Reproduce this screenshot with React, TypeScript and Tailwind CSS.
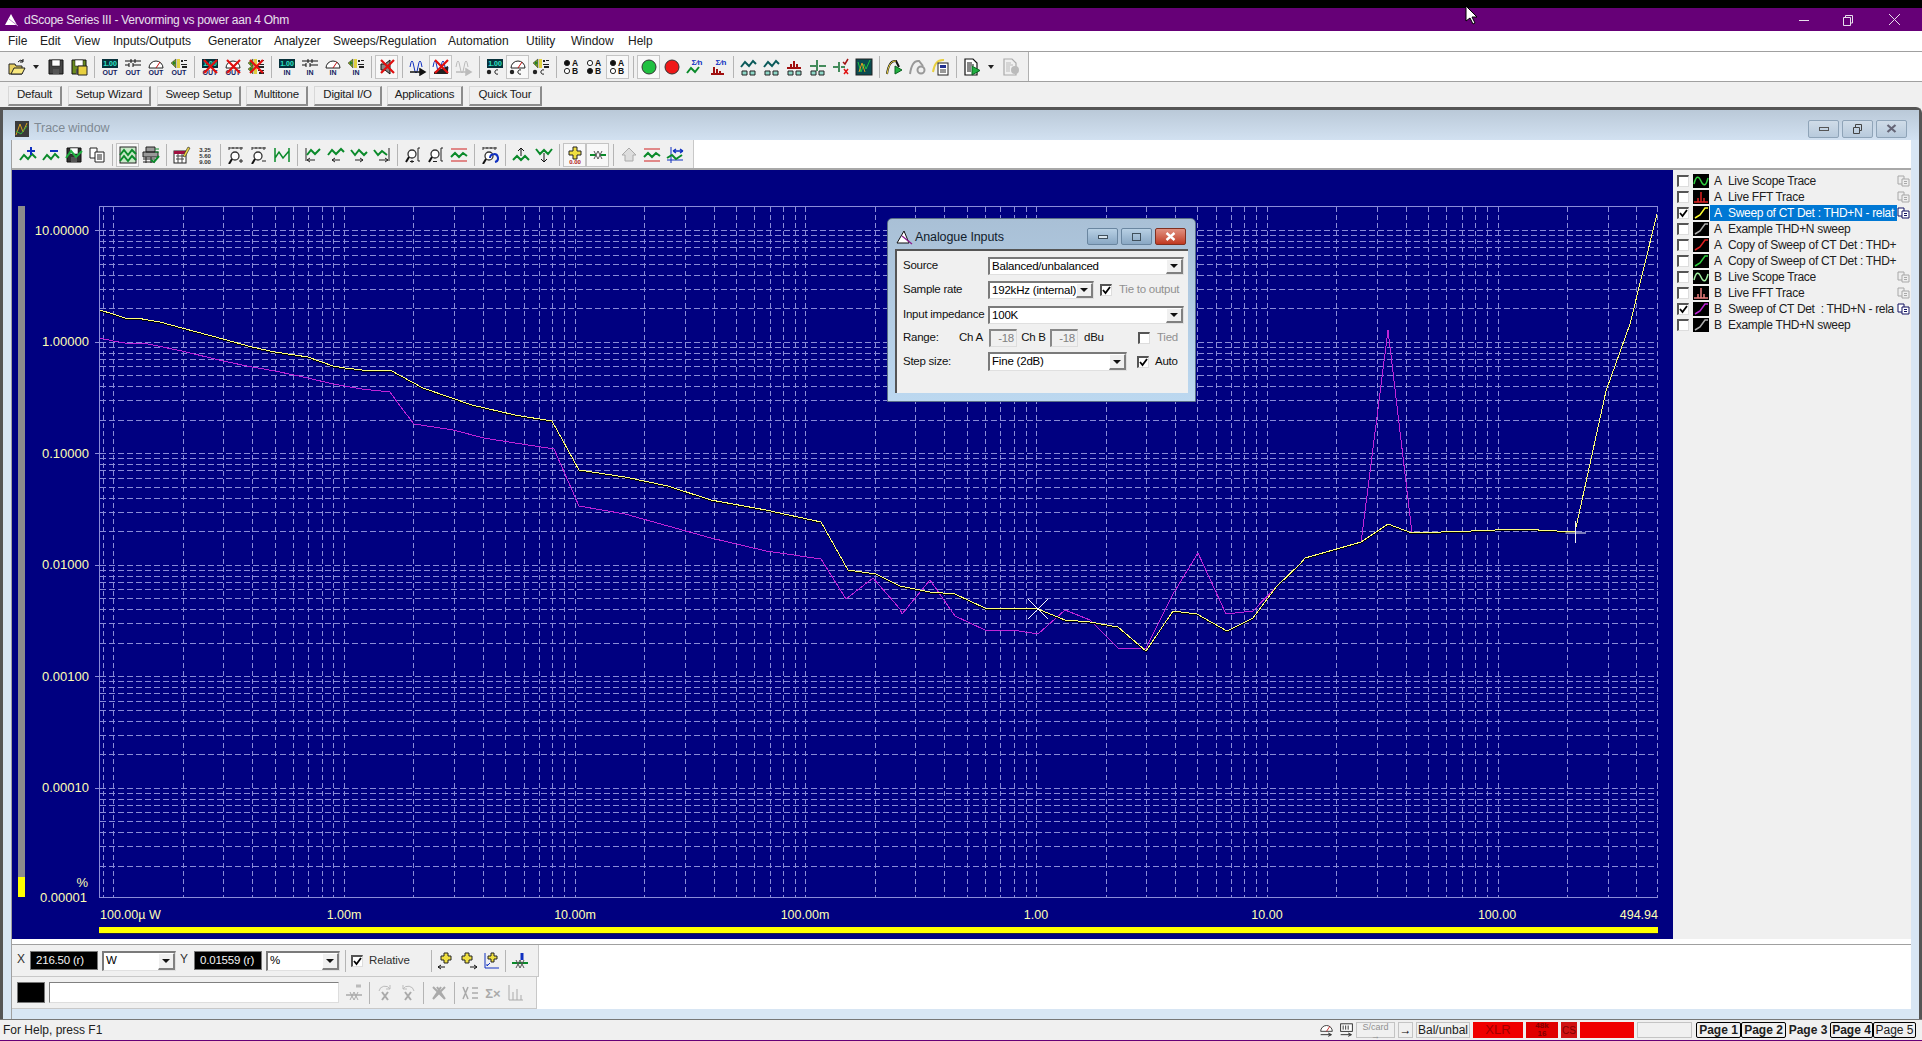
import React from 'react';

// icon helpers, all in a 18x18 box
const wave = (c = '#0a8a2a', d = 'M1 14l4-5 4 4 4-5 4 4') => <path d={d} fill="none" stroke={c} strokeWidth={2} />;
const cross = <path d="M3 2L16 15M16 2L3 15" stroke="#e01010" strokeWidth={2.2} />;
const label = (t: string) => (
  <text x={9} y={17} fontSize={7} fontWeight={700} textAnchor="middle" fill="#102060">{t}</text>
);
const disp = (
  <>
    <rect x={1} y={1} width={16} height={9} fill="#06303a" />
    <text x={9} y={8} fontSize={7} fontWeight={700} textAnchor="middle" fill="#30e8c8">1.00</text>
  </>
);
const swi = <path d="M1 3h6M1 7h4M11 3h6M9 7h8M7 1v4M11 1v4M5 5v4M9 5v4M7 3h4" stroke="#111" fill="none" />;
const dial = (
  <>
    <path d="M2 10a7 7 0 0 1 14 0z" fill="#fff" stroke="#222" />
    <path d="M9 10l4-6" stroke="#c01010" />
  </>
);
const gen = (
  <>
    <path d="M1 5l5-4v9z" fill="#7a9a20" stroke="#333" strokeWidth={0.5} />
    <rect x={7} y={1} width={3} height={9} fill="#e0d040" />
    <path d="M11 2h2v2h-2zM14 2h3v1h-3zM11 6h6v1h-6zM12 8h5v2h-5z" fill="#222" />
    <path d="M3 3l3 2-3 2z" fill="#208030" />
  </>
);
const floppy = (body: string, extra?: React.ReactNode) => (
  <>
    <path d="M2 2h14v14H2z" fill={body} stroke="#111" />
    <rect x={5} y={2} width={8} height={6} fill="#fff" stroke="#111" strokeWidth={0.5} />
    <rect x={6} y={11} width={6} height={5} fill="#555" />
    {extra}
  </>
);
const selDots = (
  <>
    <circle cx={3} cy={14} r={2.2} fill="#222" />
    <path d="M12 12a2.2 2.2 0 1 0 0 4" fill="none" stroke="#222" />
  </>
);
const ab = (a: boolean) => (
  <>
    <circle cx={4} cy={5} r={2.6} fill={a ? '#111' : '#fff'} stroke="#222" />
    <circle cx={4} cy={13} r={2.6} fill={a ? '#fff' : '#111'} stroke="#222" />
    <text x={12} y={8} fontSize={8.5} fontWeight={700} textAnchor="middle" fill="#111">A</text>
    <text x={12} y={16} fontSize={8.5} fontWeight={700} textAnchor="middle" fill="#111">B</text>
  </>
);
const mini = (c: string) => (
  <>
    <path d={c === 'r' ? 'M1 10h14M8 3v7M5 6v4M11 6v4' : 'M1 9l4-5 4 4 4-5 3 3'} fill="none" stroke={c === 'r' ? '#a01010' : '#0a5a5a'} strokeWidth={2} />
    <path d="M2 13h5v4H2zM10 13h5v4h-5z" fill="#8fd8c8" stroke="#222" />
  </>
);
const ruler = <path d="M2 2h14M2 1v3M6 1v2M10 1v2M14 1v3" stroke="#333" fill="none" />;
const lens = (
  <>
    <circle cx={8} cy={8} r={4} fill="#fff" stroke="#333" strokeWidth={1.3} />
    <path d="M5 11l-3 5" stroke="#111" strokeWidth={2} />
  </>
);
const brack = <path d="M16 2h-2v13h2" stroke="#222" fill="none" />;
const blue = '#1030c0';

const icons: Record<string, React.ReactNode> = {
  open: (
    <>
      <path d="M1 6h6l1 2h6v8H1z" fill="#e8d060" stroke="#222" />
      <path d="M3 16l3-6h11l-3 6z" fill="#f8e880" stroke="#222" />
      <path d="M10 4q2-3 5-1M15 1v3h-3" fill="none" stroke="#111" />
    </>
  ),
  save: floppy('#444'),
  saveas: (
    <>
      {floppy('#6a8a20')}
      <path d="M8 8h9v9H8z" fill="#e8d040" stroke="#222" />
    </>
  ),
  oD: <>{disp}{label('OUT')}</>,
  oS: <>{swi}{label('OUT')}</>,
  oM: <>{dial}{label('OUT')}</>,
  oG: <>{gen}{label('OUT')}</>,
  xD: <>{disp}{label('OUT')}{cross}</>,
  xM: <>{dial}{label('OUT')}{cross}</>,
  xG: <>{gen}<g transform="translate(0 6)">{gen}</g>{cross}</>,
  iD: <>{disp}{label('IN')}</>,
  iS: <>{swi}{label('IN')}</>,
  iM: <>{dial}{label('IN')}</>,
  iG: <>{gen}{label('IN')}</>,
  mute: (
    <>
      <path d="M3 6h4l5-4v14l-5-4H3z" fill="#888" stroke="#111" />
      {cross}
    </>
  ),
  wgo: (
    <>
      <path d="M1 9q2-12 4 0t4 0q2-12 4 0" fill="none" stroke={blue} />
      <path d="M1 14h12M11 11l5 3-5 3z" fill="#111" stroke="#111" strokeWidth={1.5} />
    </>
  ),
  wx: (
    <>
      <path d="M1 9q2-12 4 0t4 0q2-12 4 0t3 0" fill="none" stroke={blue} />
      <path d="M2 14l14-6v8H2z" fill="#222" />
      {cross}
    </>
  ),
  wgray: (
    <>
      <path d="M1 9q2-12 4 0t4 0q2-12 4 0" fill="none" stroke="#bbb" />
      <path d="M1 14h12M11 11l5 3-5 3z" fill="#bbb" stroke="#bbb" strokeWidth={1.5} />
    </>
  ),
  sD: <g transform="translate(0 0)">{disp}{selDots}</g>,
  sM: <>{dial}{selDots}</>,
  sG: <>{gen}{selDots}</>,
  ab1: ab(true),
  ab2: ab(false),
  ab3: ab(true),
  go: <circle cx={9} cy={9} r={7} fill="#20c040" stroke="#333" />,
  stop: <circle cx={9} cy={9} r={7} fill="#f01818" stroke="#333" />,
  sig: (
    <>
      {wave('#0a8a2a', 'M1 15l4-5 4 4 4-5')}
      <text x={11} y={7} fontSize={8} fontWeight={700} textAnchor="middle" fill={blue}>Σ⁄n</text>
    </>
  ),
  fft: (
    <>
      <path d="M2 16h13M5 16V9M8 16v-5M11 16v-3" stroke="#a01010" strokeWidth={2} />
      <text x={12} y={7} fontSize={8} fontWeight={700} textAnchor="middle" fill={blue}>Σ⁄n</text>
    </>
  ),
  a1: mini('g'),
  a2: mini('g'),
  a3: mini('r'),
  a4: (
    <>
      <path d="M1 8h6M8 2v11M10 8h7" stroke="#0a6a2a" strokeWidth={1.5} />
      <path d="M2 13h5v4H2zM10 13h5v4h-5z" fill="#8fd8c8" stroke="#222" />
    </>
  ),
  a5: (
    <>
      <path d="M1 9h5M7 4v10M9 9h4" stroke="#0a6a2a" strokeWidth={1.5} />
      <path d="M11 4l2 2 3-5" stroke="#a01010" fill="none" strokeWidth={1.5} />
      <path d="M12 11l4 5M16 11l-4 5" stroke="#e01010" strokeWidth={1.5} />
    </>
  ),
  a6: (
    <>
      <rect x={1} y={1} width={16} height={16} fill="#0a4a50" stroke="#222" />
      <path d="M3 4l3 10 3-8 2 5 4-9" fill="none" stroke="#20c040" />
      <path d="M4 14l3-9 3 9" fill="none" stroke="#d8a020" />
    </>
  ),
  b1: (
    <>
      <path d="M1 16Q3 2 10 3l3 6" fill="none" stroke="#111" strokeWidth={2} />
      <path d="M1 16Q3 2 10 3" fill="none" stroke="#e8d040" />
      <path d="M9 8l7 4-7 4z" fill="#20b040" stroke="#0a6020" />
    </>
  ),
  b2: (
    <>
      <path d="M1 16Q3 2 10 3l4 5" fill="none" stroke="#999" strokeWidth={2} />
      <circle cx={12} cy={12} r={3.5} fill="none" stroke="#999" strokeWidth={2} />
    </>
  ),
  b3: (
    <>
      <path d="M1 14Q3 1 12 2" fill="none" stroke="#e8d040" strokeWidth={2} />
      <rect x={6} y={5} width={10} height={12} fill="#fff" stroke="#222" />
      <path d="M8 7h6v3H8z" fill="#203090" />
      <path d="M8 12h6M8 14h6" stroke="#333" />
    </>
  ),
  c1: (
    <>
      <path d="M2 1h8l4 4v12H2z" fill="#fff" stroke="#111" strokeWidth={1.2} />
      <path d="M4 5h5M4 7h7M4 9h4M4 11h4M4 13h4" stroke="#111" />
      <path d="M9 8l8 4.5L9 17z" fill="#20b040" stroke="#0a6020" />
    </>
  ),
  c2: (
    <>
      <path d="M2 1h8l4 4v12H2z" fill="#f0f0f0" stroke="#aaa" strokeWidth={1.2} />
      <path d="M4 5h5M4 7h7M4 9h4M4 11h4M4 13h4" stroke="#bbb" />
      <circle cx={13} cy={12} r={4} fill="#bbb" />
    </>
  ),
  // trace window toolbar
  'tr+': <>{wave()}<path d="M12 1v8M8 5h8" stroke={blue} strokeWidth={2} /></>,
  'tr-': <>{wave()}<path d="M8 5h8" stroke={blue} strokeWidth={2} /></>,
  tsave: <>{floppy('#333')}{wave('#20b040', 'M1 12l5-7 5 6 6-6')}</>,
  tcopy: (
    <>
      <path d="M2 2h7v10H2z" fill="#fff" stroke="#222" />
      <path d="M7 6h9v10H7z" fill="#fff" stroke="#222" />
      <path d="M9 9h5M9 11h5M9 13h5" stroke="#222" />
    </>
  ),
  tchart: (
    <>
      <rect x={1} y={1} width={16} height={16} fill="#c8e8c8" stroke="#222" />
      {wave('#0a8a2a', 'M1 9l4-5 4 5 4-5 4 4')}
      {wave('#0a8a2a', 'M1 15l4-5 4 5 4-5 4 4')}
    </>
  ),
  tprint: (
    <>
      <path d="M4 1h9v5H4zM1 6h15v5H1z" fill="#999" stroke="#222" />
      <path d="M1 13h12M1 16h12M4 11v6M9 11v6" stroke="#222" />
      {wave('#0a8a2a', 'M9 14l3 2 5-6')}
      <path d="M13 3h4M13 6h4" stroke="#0a8a2a" />
    </>
  ),
  tedit: (
    <>
      <rect x={1} y={5} width={12} height={12} fill="#fff" stroke="#222" />
      <rect x={1} y={5} width={12} height={3} fill="#a01040" />
      <path d="M3 10h8M3 13h8M5 8v9M9 8v9" stroke="#444" />
      <path d="M10 10l5-9 2 1-5 9z" fill="#e8d040" stroke="#222" strokeWidth={0.6} />
    </>
  ),
  tnum: (
    <g fontSize={6} fontWeight={700} fill="#333" textAnchor="middle">
      <text x={9} y={6}>3.25</text>
      <text x={9} y={12}>5.60</text>
      <text x={9} y={18}>9.00</text>
    </g>
  ),
  'z+': <>{ruler}<g transform="translate(0 2)">{lens}</g><path d="M14 13v4M12 15h4" stroke="#222" /></>,
  'z-': <>{ruler}<g transform="translate(0 2)">{lens}</g><path d="M12 15h4" stroke="#222" /></>,
  zm: <path d="M2 2v14M16 2v14M2 12l4-6 4 6 6-7" fill="none" stroke="#0a8a2a" strokeWidth={1.5} />,
  l1: <><path d="M2 2v13" stroke="#222" />{wave('#0a8a2a', 'M3 9l4-5 4 4 5-5')}<path d="M3 14h8M3 14l3-2M3 14l3 2" stroke="#222" fill="none" /></>,
  l2: <>{wave('#0a8a2a', 'M1 9l4-5 4 4 5-5 3 3')}<path d="M5 14h8M5 14l3-2M5 14l3 2" stroke="#222" fill="none" /></>,
  l3: <>{wave('#0a8a2a', 'M1 4l4 5 4-5 5 5 3-3')}<path d="M5 14h8M13 14l-3-2M13 14l-3 2" stroke="#222" fill="none" /></>,
  l4: <><path d="M16 2v13" stroke="#222" />{wave('#0a8a2a', 'M1 4l4 5 4-4 5 4')}<path d="M6 14h9M15 14l-3-2M15 14l-3 2" stroke="#222" fill="none" /></>,
  'm+': <>{lens}{brack}<path d="M8 14v3M6 15.5h4" stroke="#222" /></>,
  'm-': <>{lens}{brack}<path d="M6 15.5h4" stroke="#222" /></>,
  mw: <><path d="M1 3h16M1 15h16" stroke="#d02020" />{wave('#0a8a2a', 'M1 11l4-4 4 4 4-4 4 3')}</>,
  mu: <>{ruler}<g transform="translate(0 2)">{lens}</g><path d="M9 12a4 4 0 1 1 5 4" fill="none" stroke={blue} strokeWidth={2} /></>,
  up: <>{wave('#0a8a2a', 'M1 14l4-4 4 4 4-4 4 4')}<path d="M9 10V2M6 5l3-3 3 3" stroke="#111" fill="none" /></>,
  dn: <>{wave('#0a8a2a', 'M1 3l4 5 4-4 4 4 4-5')}<path d="M9 7v9M6 13l3 3 3-3" stroke="#111" fill="none" /></>,
  cur: (
    <>
      <path d="M7 1h4v4h4v4h-4v4H7V9H3V5h4z" fill="#f0e040" stroke="#222" />
      <text x={9} y={17.5} fontSize={6} fontWeight={700} textAnchor="middle" fill="#b02020">0.00</text>
    </>
  ),
  curx: <><path d="M1 9h6M11 9h6" stroke="#0a8a2a" strokeWidth={2} /><path d="M5 5l4 8M9 5l4 8M5 13l4-8M9 13l4-8" stroke="#555" /></>,
  g1: <path d="M9 2l7 7-3 0v6H5V9H2z" fill="#ddd" stroke="#aaa" />,
  g2: <><path d="M1 3h16M1 15h16" stroke="#d02020" />{wave('#0a8a2a', 'M1 11l4-4 4 4 4-4 4 3')}</>,
  g3: <><path d="M5 1v16M1 14h16" stroke={blue} />{wave('#0a8a2a', 'M1 12l5-3 4 4 6-4')}<path d="M7 5h10M7 5l3-2M7 5l3 2M17 5l-3-2M17 5l-3 2" stroke={blue} fill="none" strokeWidth={1.4} /></>,
  // cursor toolbar
  cl: <><path d="M7 1h4v3h3v4h-3v3H7V8H4V4h3z" fill="#f0e040" stroke="#222" /><path d="M1 15h7M1 15l3-2M1 15l3 2" stroke="#111" fill="none" /></>,
  cr: <><path d="M5 1h4v3h3v4H9v3H5V8H2V4h3z" fill="#f0e040" stroke="#222" /><path d="M10 15h7M17 15l-3-2M17 15l-3 2" stroke="#111" fill="none" /></>,
  cc: <><path d="M2 1v15h14" stroke={blue} fill="none" /><path d="M8 1h3v3h3v3h-3v3H8V7H5V4h3z" fill="#f0e040" stroke="#222" /><path d="M4 14l3-3M4 14v-2" stroke={blue} /></>,
  cd: <><path d="M11 1v7" stroke={blue} strokeWidth={3} /><path d="M1 11h16" stroke="#0a8a2a" strokeWidth={2} /><path d="M5 8l4 8M9 8l4 8M5 16l4-8M9 16l4-8" stroke="#555" /></>,
  e1: <><path d="M1 11h16" stroke="#bbb" strokeWidth={2} /><path d="M11 2h5" stroke="#bbb" strokeWidth={3} /><path d="M5 8l4 8M9 8l4 8M5 16l4-8M9 16l4-8" stroke="#aaa" /></>,
  e2: <><path d="M3 7a6 6 0 0 1 11-2M14 1v4h-4" stroke="#bbb" fill="none" /><path d="M6 8l6 8M12 8l-6 8" stroke="#aaa" strokeWidth={2} /></>,
  e3: <><path d="M15 7a6 6 0 0 0-11-2M4 1v4h4" stroke="#bbb" fill="none" /><path d="M6 8l6 8M12 8l-6 8" stroke="#aaa" strokeWidth={2} /></>,
  e4: <path d="M3 3l12 12M15 3L3 15M7 3l8 12M11 3L3 15" stroke="#aaa" strokeWidth={2} />,
  e5: <path d="M2 3l5 12M7 3L2 15M11 4h6M11 9h6M11 14h6" stroke="#aaa" strokeWidth={1.5} />,
  e6: <text x={9} y={14} fontSize={13} fontWeight={700} textAnchor="middle" fill="#aaa">Σ×</text>,
  e7: <path d="M2 1v15h14M6 16V8M10 16V5M14 16v-5" stroke="#aaa" fill="none" />,
};

function Ic({ n, size = 18 }: { n: string; size?: number }) {
  return (
    <svg width={size} height={size} viewBox="0 0 18 18" shapeRendering="geometricPrecision">
      {icons[n]}
    </svg>
  );
}

// names: "|" separator, "~" dropdown arrow, trailing * means pressed button
function Toolbar({ items, className, tight }: { items: string[]; className: string; tight?: boolean }) {
  return (
    <div className={className}>
      {items.map((it, i) => {
        if (it === '|') {
          return (
            <div key={i} className={tight ? 'w-[5px] h-full flex justify-center items-center' : 'w-[8px] h-full flex justify-center items-center'}>
              <div className="w-[1px] h-[22px] bg-[#b4b4b4]" />
            </div>
          );
        }
        if (it === '~') {
          return (
            <div key={i} className="w-[16px] h-full flex justify-center items-center">
              <div className="w-0 h-0 border-x-[3px] border-x-transparent border-t-[4px] border-t-[#222]" />
            </div>
          );
        }
        const pressed = it.endsWith('*');
        return (
          <div
            key={i}
            className={
              pressed
                ? 'w-[23px] h-[24px] flex justify-center items-center border border-[#c4c4c4] bg-[#f8f8f8]'
                : 'w-[23px] h-[24px] flex justify-center items-center'
            }
          >
            <Ic n={pressed ? it.slice(0, -1) : it} />
          </div>
        );
      })}
    </div>
  );
}

function Arrow() {
  return (
    <div className="w-[17px] h-full shrink-0 flex justify-center items-center bg-[#f0f0f0] border-l border-t border-l-white border-t-white border-r-2 border-b-2 border-r-[#808080] border-b-[#808080]">
      <div className="w-0 h-0 border-x-[4px] border-x-transparent border-t-[4px] border-t-[#111]" />
    </div>
  );
}

function Combo({ text, className }: { text: string; className: string }) {
  return (
    <div className={'flex bg-white border-l-2 border-t-2 border-l-[#7a7a7a] border-t-[#7a7a7a] border-r border-b border-r-[#e0e0e0] border-b-[#e0e0e0] ' + className}>
      <div className="flex-1 pl-[2px] text-[11.5px] leading-[15px] tracking-[-0.2px] text-black whitespace-nowrap overflow-hidden">{text}</div>
      <Arrow />
    </div>
  );
}

function Check({ on }: { on?: boolean }) {
  return (
    <div className="w-[12px] h-[12px] shrink-0 bg-white border-l-2 border-t-2 border-l-[#555] border-t-[#555] border-r border-b border-r-[#ddd] border-b-[#ddd] flex items-center justify-center">
      {on && (
        <svg width={9} height={9} viewBox="0 0 9 9">
          <path d="M1 4l2.5 3L8 1" fill="none" stroke="#000" strokeWidth={1.8} />
        </svg>
      )}
    </div>
  );
}

function Field({ text }: { text: string }) {
  return (
    <div className="w-[68px] h-[19px] bg-black border border-[#777] text-[#f4f4f4] text-[11.5px] tracking-[-0.2px] leading-[17px] pl-[5px] whitespace-nowrap">{text}</div>
  );
}

// chart scale, in page pixels
const px = (v: number) => 344 + 230.7 * (Math.log10(v) + 3);
const py = (v: number) => 342.7 - 111.5 * Math.log10(v);
const LEFT = 99.5;
const RIGHT = 1657.5;
const TOP = 207.5;
const BOTTOM = 898.5;

const xLines: number[] = [];
const yLines: number[] = [];
for (let e = -5; e <= 2; e++) {
  for (let m = 1; m <= 9; m++) {
    const x = px(m * 10 ** e);
    if (x > LEFT + 1 && x < RIGHT - 1) xLines.push(Math.round(x) + 0.5);
  }
}
for (let e = -5; e <= 1; e++) {
  for (let m = 1; m <= 9; m++) {
    const y = py(m * 10 ** e);
    if (y > TOP + 1 && y < BOTTOM - 1) yLines.push(Math.round(y) + 0.5);
  }
}

const tail = '1412,534 1471,532 1520,530 1575,533 1606,392 1630,325 1657,215';
const yellow =
  '100,311 113,315 125,319 137,319 148,321 160,323 182,329 223,340 252,348 275,353 308,358 333,367 345,369 362,371 390,371 423,389 472,406 515,416 552,422 579,471 625,478 668,487 711,501 766,511 821,523 848,571 876,575 900,587 930,593 955,595 985,609 1025,609 1038,610 1065,621 1090,623 1118,628 1146,652 1173,612 1197,615 1227,632 1253,619 1277,587 1300,565 1305,559 1361,543 1388,525 ' +
  tail;
const purple =
  '100,339 113,342 125,344 148,345 182,352 223,362 252,368 275,372 308,379 333,385 362,390 390,393 400,407 414,425 453,431 484,439 515,444 554,450 579,507 625,515 668,527 711,539 766,552 821,560 846,600 873,579 900,610 902,615 930,581 955,617 985,631 1012,631 1038,635 1065,611 1090,621 1118,649 1146,649 1173,595 1198,554 1226,615 1253,612 1277,587 1300,565 1305,559 1361,544 1388,331 ' +
  tail;

const yLabels = ['10.00000', '1.00000', '0.10000', '0.01000', '0.00100', '0.00010'];
const xLabels: [string, number][] = [
  ['1.00m', 344],
  ['10.00m', 575],
  ['100.00m', 805],
  ['1.00', 1036],
  ['10.00', 1267],
  ['100.00', 1497],
];

function Chart() {
  const grid = '#8a8cd8';
  return (
    <svg width={1661} height={769} viewBox="12 171 1661 769" className="block">
      <rect x={18} y={207} width={7} height={691} fill="#8c8c8c" />
      <rect x={18} y={878} width={7} height={20} fill="#ffff00" />
      {yLines.map((y, i) => (
        <path key={i} d={`M${LEFT} ${y}H${RIGHT}`} stroke={grid} strokeDasharray="6 3" shapeRendering="crispEdges" />
      ))}
      {xLines.map((x, i) => (
        <path key={i} d={`M${x} ${TOP}V${BOTTOM}`} stroke={grid} strokeDasharray="5 3" shapeRendering="crispEdges" />
      ))}
      <path d={`M${RIGHT} ${TOP}H${LEFT}V${BOTTOM}H${RIGHT}`} fill="none" stroke={grid} shapeRendering="crispEdges" />
      <path d={`M${RIGHT} ${TOP}V${BOTTOM}`} stroke={grid} strokeDasharray="5 3" shapeRendering="crispEdges" />
      {yLabels.map((t, i) => (
        <React.Fragment key={t}>
          <path d={`M95 ${Math.round(py(10 / 10 ** i)) + 0.5}H99`} stroke={grid} shapeRendering="crispEdges" />
          <text x={89} y={py(10 / 10 ** i) + 4.5} fontSize={13} textAnchor="end" fill="#ffffb4">{t}</text>
        </React.Fragment>
      ))}
      <text x={88} y={888} fontSize={13} textAnchor="end" fill="#ffffb4">%</text>
      <text x={87} y={903} fontSize={13} textAnchor="end" fill="#ffffb4">0.00001</text>
      <text x={100} y={920} fontSize={12.5} fill="#ffffb4">100.00µ W</text>
      {xLabels.map(([t, x]) => (
        <text key={t} x={x} y={920} fontSize={12.5} textAnchor="middle" fill="#ffffb4">{t}</text>
      ))}
      <text x={1658} y={920} fontSize={12.5} textAnchor="end" fill="#ffffb4">494.94</text>
      <rect x={99} y={928} width={1559} height={6} fill="#ffff00" />
      <path d="M99 934.5H1658" stroke="#202040" />
      <polyline points={purple} fill="none" stroke="#c024d8" shapeRendering="crispEdges" />
      <polyline points={yellow} fill="none" stroke="#000" transform="translate(0 1)" shapeRendering="crispEdges" />
      <polyline points={yellow} fill="none" stroke="#ffff80" shapeRendering="crispEdges" />
      <path d="M1028 600l20 20M1048 600l-20 20" stroke="#fff" />
      <path d="M1565.5 534H1586M1575.5 522V544" stroke="#f4f4f4" />
    </svg>
  );
}

const traces: { ab: string; name: string; col: string; kind: string; on?: boolean; copy?: boolean; sel?: boolean }[] = [
  { ab: 'A', name: 'Live Scope Trace', col: '#30d040', kind: 'sine', copy: true },
  { ab: 'A', name: 'Live FFT Trace', col: '#e02020', kind: 'fft', copy: true },
  { ab: 'A', name: 'Sweep of CT Det : THD+N - relat', col: '#ffff30', kind: 'sweep', on: true, copy: true, sel: true },
  { ab: 'A', name: 'Example THD+N sweep', col: '#b0b0b0', kind: 'sweep' },
  { ab: 'A', name: 'Copy of Sweep of CT Det : THD+', col: '#e02020', kind: 'sweep' },
  { ab: 'A', name: 'Copy of Sweep of CT Det : THD+', col: '#30d040', kind: 'sweep' },
  { ab: 'B', name: 'Live Scope Trace', col: '#a0f0a0', kind: 'sine', copy: true },
  { ab: 'B', name: 'Live FFT Trace', col: '#f08080', kind: 'fft', copy: true },
  { ab: 'B', name: 'Sweep of CT Det  : THD+N - rela', col: '#c024d8', kind: 'sweep', on: true, copy: true },
  { ab: 'B', name: 'Example THD+N sweep', col: '#b0b0b0', kind: 'sweep' },
];

function TraceRow({ t }: { t: (typeof traces)[number] }) {
  const d = t.kind === 'sine' ? 'M1 10q3-12 7-3t7-3' : t.kind === 'fft' ? 'M1 12h14M8 12V2M5 12V8M11 12V8' : 'M2 12L7 9 12 2h3';
  return (
    <div className="h-[16px] flex items-center pl-[4px] min-w-0">
      <Check on={t.on} />
      <svg width={16} height={14} viewBox="0 0 16 14" className="ml-[4px] shrink-0 bg-black">
        <path d={d} fill="none" stroke={t.col} strokeWidth={1.5} />
      </svg>
      <div className={t.sel ? 'flex-1 min-w-0 flex h-[16px] ml-[1px] pl-[4px] items-center bg-[#0078d4] text-white overflow-hidden' : 'flex-1 min-w-0 flex h-[16px] ml-[1px] pl-[4px] items-center text-[#202020] overflow-hidden'}>
        <span className="w-[14px] shrink-0">{t.ab}</span>
        <span className="whitespace-pre">{t.name}</span>
      </div>
      <div className="w-[14px] shrink-0">
        {t.copy && (
          <svg width={13} height={12} viewBox="0 0 13 12">
            <path d="M1 1h6v8H1z" fill={t.on ? '#fff' : '#eee'} stroke={t.on ? '#101060' : '#a8a8a8'} />
            <path d="M5 4h7v7H5z" fill={t.on ? '#fff' : '#eee'} stroke={t.on ? '#101060' : '#a8a8a8'} />
            <path d="M7 6.5h3M7 8.5h3" stroke={t.on ? '#101060' : '#a8a8a8'} />
          </svg>
        )}
      </div>
    </div>
  );
}

function AnalogueInputs() {
  return (
    <div className="absolute left-[875px] top-[48px] w-[309px] h-[184px] rounded-t-[5px] bg-gradient-to-b from-[#a9c0d6] to-[#bcd8f0] border border-[#5a7088] flex flex-col px-[7px] pb-[8px] text-[11.5px] tracking-[-0.25px] text-[#111]">
      <div className="h-[30px] flex items-center shrink-0 relative pt-[6px]">
        <svg width={17} height={15} viewBox="0 0 17 15" className="ml-[1px]">
          <path d="M8 1L1 13h12z" fill="#fff" stroke="#111" />
          <path d="M6 6l10 8" stroke="#8a2090" strokeWidth={1.5} />
        </svg>
        <span className="ml-[2px] text-[12.5px] tracking-[-0.1px] text-[#10202c]">Analogue Inputs</span>
        <div className="absolute right-[2px] top-[9px] flex gap-[3px]">
          <div className="w-[31px] h-[17px] rounded-[2px] border border-[#6a86a0] bg-gradient-to-b from-[#b8d0e4] to-[#8aa8c4] flex items-center justify-center">
            <div className="w-[10px] h-[4px] border border-[#40505c] bg-[#d8e4ec]" />
          </div>
          <div className="w-[31px] h-[17px] rounded-[2px] border border-[#6a86a0] bg-gradient-to-b from-[#b8d0e4] to-[#8aa8c4] flex items-center justify-center">
            <div className="w-[9px] h-[8px] border border-[#40505c]" />
          </div>
          <div className="w-[31px] h-[17px] rounded-[2px] border border-[#803020] bg-gradient-to-b from-[#e09080] to-[#c03820] flex items-center justify-center">
            <svg width={11} height={9} viewBox="0 0 11 9">
              <path d="M1.5 1l8 7M9.5 1l-8 7" stroke="#fff" strokeWidth={2.4} />
            </svg>
          </div>
        </div>
      </div>
      <div className="flex-1 bg-[#f0f0f0] border-l-2 border-t-2 border-l-[#555] border-t-[#555] pl-[6px] pt-[6px] flex flex-col">
        <div className="h-[18px] flex items-center">
          <span className="w-[85px] whitespace-nowrap">Source</span>
          <Combo text="Balanced/unbalanced" className="w-[196px] h-[18px]" />
        </div>
        <div className="h-[18px] mt-[6px] flex items-center">
          <span className="w-[85px] whitespace-nowrap">Sample rate</span>
          <Combo text="192kHz (internal)" className="w-[106px] h-[18px]" />
          <span className="ml-[6px]"><Check on /></span>
          <span className="ml-[7px] text-[#909090] whitespace-nowrap">Tie to output</span>
        </div>
        <div className="h-[18px] mt-[7px] flex items-center">
          <span className="w-[85px] whitespace-nowrap">Input impedance</span>
          <Combo text="100K" className="w-[196px] h-[18px]" />
        </div>
        <div className="h-[18px] mt-[5px] flex items-center">
          <span className="w-[56px]">Range:</span>
          <span className="w-[30px] whitespace-nowrap">Ch A</span>
          <div className="w-[28px] h-[18px] border-l-2 border-t-2 border-l-[#888] border-t-[#888] border-r border-b border-r-[#ddd] border-b-[#ddd] text-right pr-[2px] leading-[15px] text-[#808080]">-18</div>
          <span className="w-[33px] text-center whitespace-nowrap">Ch B</span>
          <div className="w-[28px] h-[18px] border-l-2 border-t-2 border-l-[#888] border-t-[#888] border-r border-b border-r-[#ddd] border-b-[#ddd] text-right pr-[2px] leading-[15px] text-[#808080]">-18</div>
          <span className="ml-[6px] w-[54px]">dBu</span>
          <span className="shrink-0"><Check /></span>
          <span className="ml-[7px] text-[#909090]">Tied</span>
        </div>
        <div className="h-[19px] mt-[5px] flex items-center">
          <span className="w-[85px] whitespace-nowrap">Step size:</span>
          <Combo text="Fine (2dB)" className="w-[139px] h-[19px]" />
          <span className="ml-[10px]"><Check on /></span>
          <span className="ml-[6px]">Auto</span>
        </div>
      </div>
    </div>
  );
}

const menus: [string, string][] = [
  ['File', 'w-[32px]'],
  ['Edit', 'w-[34px]'],
  ['View', 'w-[39px]'],
  ['Inputs/Outputs', 'w-[95px]'],
  ['Generator', 'w-[66px]'],
  ['Analyzer', 'w-[59px]'],
  ['Sweeps/Regulation', 'w-[115px]'],
  ['Automation', 'w-[78px]'],
  ['Utility', 'w-[45px]'],
  ['Window', 'w-[57px]'],
  ['Help', 'w-[30px]'],
];
const row1 = ['open', '~', 'save', 'saveas', '|', 'oD', 'oS', 'oM', 'oG', '|', 'xD', 'xM', 'xG', '|', 'iD', 'iS', 'iM', 'iG', '|', 'mute*', '|', 'wgo', 'wx*', 'wgray', '|', 'sD', 'sM*', 'sG', '|', 'ab1', 'ab2', 'ab3*', '|', 'go*', 'stop', 'sig', 'fft', '|', 'a1', 'a2', 'a3', 'a4', 'a5', 'a6', '|', 'b1', 'b2', 'b3', '|', 'c1', '~', 'c2'];
const row2 = ['tr+', 'tr-', 'tsave', 'tcopy', '|', 'tchart*', 'tprint', '|', 'tedit', 'tnum', '|', 'z+', 'z-', 'zm', '|', 'l1', 'l2', 'l3', 'l4', '|', 'm+', 'm-', 'mw', '|', 'mu', '|', 'up', 'dn', '|', 'cur*', 'curx*', '|', 'g1', 'g2', 'g3'];

function QuickBtn({ text, className }: { text: string; className: string }) {
  return (
    <div className={'h-[20px] flex items-center justify-center whitespace-nowrap text-[#202020] text-[11.5px] tracking-[-0.2px] bg-[#f0f0f0] border border-[#d8d8d8] border-r-2 border-b-2 border-r-[#8c8c8c] border-b-[#8c8c8c] ' + className}>
      {text}
    </div>
  );
}

function WinBtn({ children }: { children: React.ReactNode }) {
  return (
    <div className="w-[31px] h-[18px] rounded-[2px] border border-[#8fa4b8] bg-gradient-to-b from-[#d0dce8] to-[#b8cadc] flex items-center justify-center">
      {children}
    </div>
  );
}

export default function App() {
  return (
    <div className="relative w-[1922px] h-[1041px] overflow-hidden flex flex-col bg-[#f0f0f0] font-['Liberation_Sans',sans-serif] text-[12px] text-black">
      <div className="h-[8px] bg-black shrink-0" />

      <div className="h-[23px] shrink-0 bg-[#660077] flex items-center text-[#e8e0ec]">
        <svg width={17} height={14} viewBox="0 0 17 14" className="ml-[4px]">
          <path d="M7 1L1 12h12z" fill="#fff" />
          <path d="M5 6l9 7" stroke="#c080d0" />
        </svg>
        <span className="ml-[3px] text-[12px] tracking-[-0.24px]">dScope Series III - Vervorming vs power aan 4 Ohm</span>
        <div className="ml-auto flex items-center">
          <svg width={12} height={12} viewBox="0 0 12 12" className="mr-[32px]"><path d="M1 6.5h10" stroke="#e8e0ec" /></svg>
          <svg width={12} height={12} viewBox="0 0 12 12" className="mr-[34px]"><path d="M1.5 3.5h7v8h-7zM3.5 3V1.5h7V9H9" fill="none" stroke="#e8e0ec" /></svg>
          <svg width={13} height={13} viewBox="0 0 13 13" className="mr-[21px]"><path d="M1 1l11 11M12 1L1 12" stroke="#e8e0ec" /></svg>
        </div>
      </div>

      <div className="h-[20px] shrink-0 bg-white flex items-center pl-[8px] text-[12px] text-[#202020]">
        {menus.map(([m, w]) => (
          <span key={m} className={w + ' whitespace-nowrap'}>{m}</span>
        ))}
      </div>

      <div className="h-[31px] shrink-0 flex bg-white border-y border-[#a0a0a0]">
        <Toolbar items={row1} className="w-[1029px] h-full flex items-center pl-[5px] bg-[#f0f0f0] border-r border-[#b0b0b0]" />
      </div>

      <div className="h-[25px] shrink-0 flex items-center pl-[8px] pt-[2px] bg-[#f0f0f0]">
        <QuickBtn text="Default" className="w-[54px]" />
        <QuickBtn text="Setup Wizard" className="w-[83px] ml-[6px]" />
        <QuickBtn text="Sweep Setup" className="w-[84px] ml-[6px]" />
        <QuickBtn text="Multitone" className="w-[62px] ml-[5px]" />
        <QuickBtn text="Digital I/O" className="w-[68px] ml-[6px]" />
        <QuickBtn text="Applications" className="w-[76px] ml-[5px]" />
        <QuickBtn text="Quick Tour" className="w-[73px] ml-[6px]" />
      </div>

      <div className="flex-1 min-h-0 flex flex-col border-t-[3px] border-x-[3px] border-[#555] rounded-tr-[6px] bg-[#d8e6f4]">
        <div className="h-[30px] shrink-0 flex items-center pl-[12px] pr-[12px] pt-[7px] bg-gradient-to-b from-[#bac9d8] to-[#d2e1f1]">
          <svg width={14} height={16} viewBox="0 0 14 16">
            <rect width={14} height={16} fill="#3a3a3a" />
            <path d="M1 14l4-11 3 8 4-9" fill="none" stroke="#d8a020" />
            <path d="M1 10l5 3 6-8" fill="none" stroke="#30b040" />
          </svg>
          <span className="ml-[5px] text-[#7f8a94] text-[12.5px] tracking-[-0.1px]">Trace window</span>
          <div className="ml-auto flex gap-[3px]">
            <WinBtn><div className="w-[10px] h-[4px] border border-[#555]" /></WinBtn>
            <WinBtn>
              <svg width={11} height={11} viewBox="0 0 11 11"><path d="M1.5 4.5h6v6h-6zM3.5 4V1.5h6v6H8" fill="none" stroke="#444" /></svg>
            </WinBtn>
            <WinBtn>
              <svg width={11} height={9} viewBox="0 0 11 9"><path d="M1.5 1l8 7M9.5 1l-8 7" stroke="#667" strokeWidth={2.2} /></svg>
            </WinBtn>
          </div>
        </div>

        <div className="flex-1 min-h-0 flex flex-col ml-[8px] mr-[8px] border-l border-[#a0a0a0]">
          <div className="h-[30px] shrink-0 flex bg-white border-b-2 border-[#a8a8a8]">
            <Toolbar items={row2} className="w-[682px] h-full flex items-center pl-[4px] pt-[2px] bg-[#f0f0f0] border-r border-[#c8c8c8]" />
          </div>

          <div className="h-[769px] shrink-0 flex relative">
            <div className="w-[1661px] shrink-0 bg-[#000080] relative">
              <Chart />
              <AnalogueInputs />
            </div>
            <div className="flex-1 min-w-0 bg-[#f0f0f0] pt-[3px] text-[12px] tracking-[-0.3px]">
              {traces.map((t, i) => (
                <TraceRow key={i} t={t} />
              ))}
            </div>
          </div>

          <div className="h-[6px] shrink-0 bg-white border-b border-[#a0a0a0]" />

          <div className="h-[32px] shrink-0 flex bg-white">
            <div className="w-[527px] h-full bg-[#f0f0f0] border-b border-r border-[#c8c8c8] flex items-center pl-[5px] text-[#303030]">
              <span className="w-[13px] -mt-[4px]">X</span>
              <Field text="216.50 (r)" />
              <Combo text="W" className="w-[74px] h-[20px] ml-[4px]" />
              <span className="w-[14px] ml-[4px] -mt-[4px]">Y</span>
              <Field text="0.01559 (r)" />
              <Combo text="%" className="w-[74px] h-[20px] ml-[4px]" />
              <div className="w-[1px] h-[22px] bg-[#b4b4b4] ml-[5px]" />
              <span className="ml-[5px]"><Check on /></span>
              <span className="ml-[6px] w-[60px] text-[11.5px] tracking-[-0.1px]">Relative</span>
              <Toolbar items={['|', 'cl', 'cr', 'cc', '|', 'cd']} tight className="flex items-center h-full" />
            </div>
          </div>

          <div className="h-[32px] shrink-0 flex bg-white">
            <div className="w-[525px] h-full bg-[#f0f0f0] border-b border-r border-[#c8c8c8] flex items-center pl-[5px]">
              <div className="w-[28px] h-[21px] bg-black border border-[#777]" />
              <div className="w-[290px] h-[21px] ml-[4px] bg-white border border-[#808080] border-b-[#ddd] border-r-[#ddd]" />
              <Toolbar items={['e1', '|', 'e2', 'e3', '|', 'e4', '|', 'e5', 'e6', 'e7']} className="flex items-center h-full ml-[3px]" />
            </div>
          </div>

          <div className="flex-1" />
        </div>
      </div>

      <div className="h-[22px] shrink-0 bg-[#f0f0f0] border-t border-[#777] border-b border-b-[#660077] flex items-center pl-[3px] text-[12px] text-[#202020]">
        <span>For Help, press F1</span>
        <div className="ml-auto mr-[6px] flex items-center h-[16px] gap-[3px]">
          <span className="w-[14px] mr-[3px]">
            <svg width={15} height={15} viewBox="0 0 18 18">{dial}<path d="M2 14h12M11 12l4 2-4 2" stroke="#111" fill="none" /></svg>
          </span>
          <span className="w-[14px]">
            <svg width={15} height={15} viewBox="0 0 18 18"><rect x={2} y={1} width={14} height={9} fill="#fff" stroke="#111" /><path d="M5 3v5M8 3v5M11 3v5" stroke="#111" /><path d="M2 14h12M11 12l4 2-4 2" stroke="#111" fill="none" /></svg>
          </span>
          <div className="w-[39px] h-full border border-[#c4c4c4] text-[9px] leading-[9px] text-center text-[#909090]">S/card<br />→</div>
          <div className="w-[15px] h-full border border-[#c4c4c4] flex items-center justify-center font-bold leading-none text-black">→</div>
          <div className="w-[54px] h-full border border-[#c4c4c4] flex items-center justify-center whitespace-nowrap">Bal/unbal</div>
          <div className="w-[50px] h-full bg-[#f00000] text-[#a00000] text-[13px] flex items-center justify-center">XLR</div>
          <div className="w-[32px] h-full bg-[#e00000] text-[#800000] text-[8px] leading-[8px] text-center font-bold">48k<br />16</div>
          <div className="w-[16px] h-full bg-[#d01010] text-[#800000] flex items-center justify-center text-[10px]">CS</div>
          <div className="w-[54px] h-full bg-[#f00000]" />
          <div className="w-[55px] h-full border border-[#c4c4c4]" />
          <div className="flex ml-[1px]">
            <div className="w-[45px] h-[16px] border border-black rounded-[2px] font-bold flex items-center justify-center">Page 1</div>
            <div className="w-[45px] h-[16px] border border-black rounded-[2px] font-bold flex items-center justify-center">Page 2</div>
            <div className="w-[44px] h-[16px] font-bold flex items-center justify-center">Page 3</div>
            <div className="w-[43px] h-[16px] border border-black rounded-[2px] font-bold flex items-center justify-center">Page 4</div>
            <div className="w-[43px] h-[16px] border border-black rounded-[2px] flex items-center justify-center">Page 5</div>
          </div>
        </div>
      </div>

      {/* mouse pointer caught in the screenshot */}
      <svg width={14} height={20} viewBox="0 0 14 20" className="absolute left-[1465px] top-[5px]">
        <path d="M1 1v15l4-3 3 6 2-1-3-6h5z" fill="#fff" stroke="#000" />
      </svg>
    </div>
  );
}
